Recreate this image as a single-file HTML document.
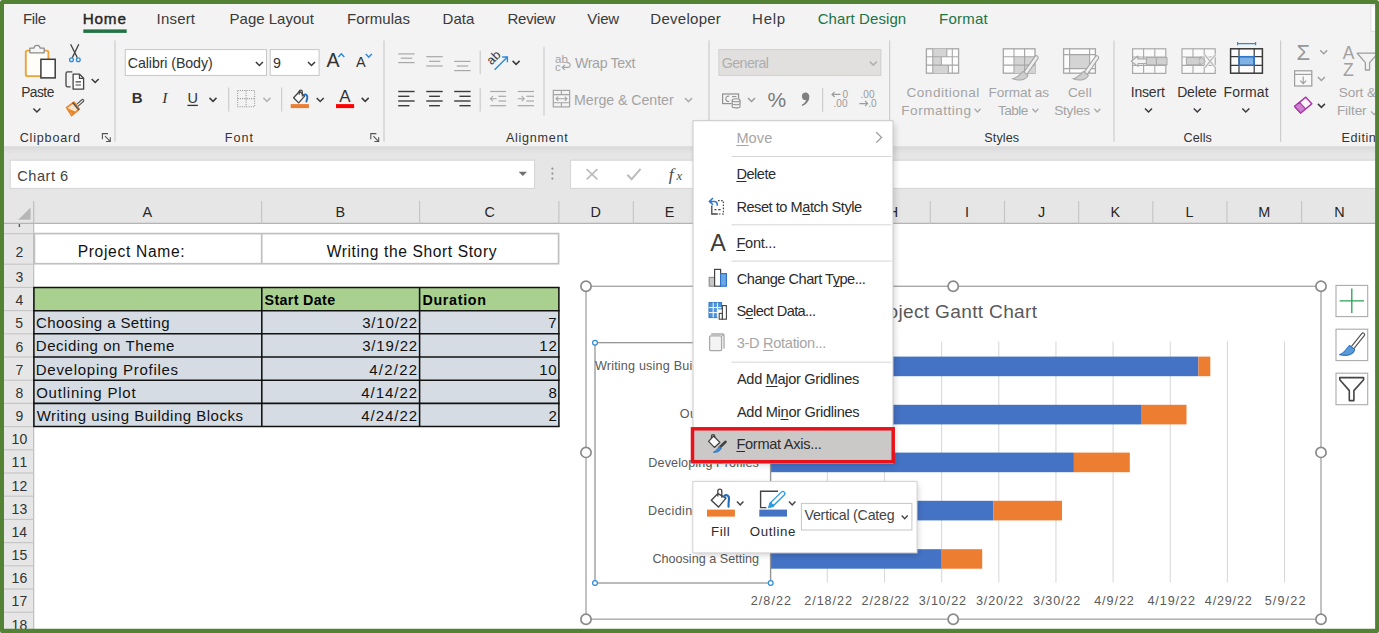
<!DOCTYPE html>
<html lang="en"><head><meta charset="utf-8"><title>Excel Gantt Chart - Format Axis</title>
<style>
html,body{margin:0;padding:0;background:#fff;}
#app{position:relative;width:1379px;height:633px;overflow:hidden;background:#fff;font-family:"Liberation Sans", sans-serif;}
#app svg{position:absolute;left:0;top:0;}
.t{position:absolute;white-space:pre;line-height:1;margin:0;padding:0;}
.c{position:absolute;overflow:hidden;}
u{text-decoration:underline;text-decoration-thickness:1px;text-underline-offset:2px;}
</style></head><body>
<div id="app">
<svg width="1379" height="633" viewBox="0 0 1379 633"><defs><linearGradient id="rsh" x1="0" y1="0" x2="0" y2="1"><stop offset="0" stop-color="#d9d9d9"/><stop offset="1" stop-color="#e6e6e6"/></linearGradient><filter id="ms" x="-10%" y="-10%" width="125%" height="125%"><feGaussianBlur stdDeviation="3"/></filter></defs>
<rect x="0.00" y="0.00" width="1379.00" height="147.00" fill="#f3f3f3" />
<rect x="0.00" y="146.40" width="1379.00" height="78.60" fill="#e6e6e6" />
<rect x="0.00" y="146.40" width="1379.00" height="7.60" fill="url(#rsh)" />
<rect x="1370.80" y="5.20" width="6.20" height="26.10" fill="#fdfdfd" stroke="#e2dfe2" stroke-width="1" />
<rect x="83.30" y="29.40" width="43.40" height="3.50" fill="#217346" />
<line x1="115.00" y1="40.50" x2="115.00" y2="141.80" stroke="#c9c9c9" stroke-width="1.1" />
<line x1="384.00" y1="40.50" x2="384.00" y2="141.80" stroke="#c9c9c9" stroke-width="1.1" />
<line x1="709.00" y1="40.50" x2="709.00" y2="141.80" stroke="#c9c9c9" stroke-width="1.1" />
<line x1="889.70" y1="40.50" x2="889.70" y2="141.80" stroke="#c9c9c9" stroke-width="1.1" />
<line x1="1114.00" y1="40.50" x2="1114.00" y2="141.80" stroke="#c9c9c9" stroke-width="1.1" />
<line x1="1280.60" y1="40.50" x2="1280.60" y2="141.80" stroke="#c9c9c9" stroke-width="1.1" />
<rect x="25.80" y="50.60" width="22.60" height="25.50" fill="#fffdf8" stroke="#e9a43a" stroke-width="1.9" rx="1.6" />
<path d="M29.9 52.8 V48.2 H33.9 A3.2 3.4 0 0 1 40.2 48.2 H44.2 V52.8 Z" fill="#f6f6f6" stroke="#8c8c8c" stroke-width="1.3" stroke-linejoin="round"/>
<rect x="40.90" y="59.30" width="14.30" height="18.60" fill="#ffffff" stroke="#3b3b3b" stroke-width="1.5" />
<path d="M33.40 108.55 L36.90 112.05 L40.40 108.55" fill="none" stroke="#3a3a3a" stroke-width="1.5" stroke-linejoin="miter"/>
<path d="M70.6 44.3 L77.3 57.6 M78.8 44.3 L72.3 57.6" fill="none" stroke="#444" stroke-width="1.3" />
<circle cx="71.50" cy="59.70" r="1.9" fill="none" stroke="#2e8ad8" stroke-width="1.3"/>
<circle cx="78.30" cy="59.70" r="1.9" fill="none" stroke="#2e8ad8" stroke-width="1.3"/>
<path d="M72.3 71.9 H67.6 A1.6 1.6 0 0 0 66 73.5 V85.2 A1.6 1.6 0 0 0 67.6 86.8 H70.6" fill="none" stroke="#444" stroke-width="1.3" />
<path d="M73.1 74.2 H79.6 L83.6 78.2 V89.2 H73.1 Z" fill="#fbfbfb" stroke="#444" stroke-width="1.3" stroke-linejoin="round"/>
<path d="M79.4 74.4 V78.4 H83.4 M75.6 81.9 H81 M75.6 85 H81" fill="none" stroke="#444" stroke-width="1.1" />
<path d="M91.70 78.95 L95.20 82.45 L98.70 78.95" fill="none" stroke="#3a3a3a" stroke-width="1.5" stroke-linejoin="miter"/>
<path d="M76.2 106.2 L82.6 100.6" fill="none" stroke="#555" stroke-width="3.4" stroke-linecap="round"/>
<path d="M76.2 106.2 L82.6 100.6" fill="none" stroke="#f3f3f3" stroke-width="1.2" stroke-linecap="round"/>
<path d="M66.6 107.6 L73.9 102.1 L79.3 109.2 L71.6 115.6 Z" fill="#fbe3c8" stroke="#e8852a" stroke-width="1.7" stroke-linejoin="round"/>
<path d="M67.5 108.2 L72.2 114.6 L75.6 111.8 Z" fill="#e8852a" />
<path d="M72.6 102.6 L78.9 110" fill="none" stroke="#555" stroke-width="1.6" />
<path d="M102.4 139.2 V133.6 H108.0" fill="none" stroke="#555" stroke-width="1.1" />
<path d="M105.0 136.2 L110.1 141.3 M110.3 137.2 V141.5 H106.0" fill="none" stroke="#555" stroke-width="1.1" />
<rect x="125.30" y="49.60" width="141.20" height="25.80" fill="#fff" stroke="#c6c6c6" stroke-width="1" />
<rect x="270.20" y="49.60" width="48.90" height="25.80" fill="#fff" stroke="#c6c6c6" stroke-width="1" />
<path d="M255.90 62.05 L259.40 65.55 L262.90 62.05" fill="none" stroke="#3a3a3a" stroke-width="1.5" stroke-linejoin="miter"/>
<path d="M308.00 62.05 L311.50 65.55 L315.00 62.05" fill="none" stroke="#3a3a3a" stroke-width="1.5" stroke-linejoin="miter"/>
<path d="M338.30 57.00 L341.30 53.80 L344.30 57.00" fill="none" stroke="#2e8ad8" stroke-width="1.5" stroke-linejoin="miter"/>
<path d="M365.80 54.00 L368.80 57.20 L371.80 54.00" fill="none" stroke="#2e8ad8" stroke-width="1.5" stroke-linejoin="miter"/>
<line x1="187.40" y1="105.40" x2="197.90" y2="105.40" stroke="#333" stroke-width="1.3" />
<path d="M209.50 97.85 L213.00 101.35 L216.50 97.85" fill="none" stroke="#3a3a3a" stroke-width="1.5" stroke-linejoin="miter"/>
<line x1="228.70" y1="87.40" x2="228.70" y2="111.50" stroke="#c9c9c9" stroke-width="1.1" />
<rect x="237.60" y="90.50" width="17.00" height="16.30" fill="none" stroke="#9c9c9c" stroke-width="1.1" stroke-dasharray="1.1 1.15"/>
<path d="M246.1 90.5 V106.8 M237.6 98.6 H254.6" fill="none" stroke="#9c9c9c" stroke-width="1.1" stroke-dasharray="1.1 1.15"/>
<path d="M263.40 97.85 L266.90 101.35 L270.40 97.85" fill="none" stroke="#b5b5b5" stroke-width="1.5" stroke-linejoin="miter"/>
<line x1="281.70" y1="87.40" x2="281.70" y2="111.50" stroke="#c9c9c9" stroke-width="1.1" />
<path d="M293.6 97.7 L299.6 91.2 L304.6 96.1 L298.7 102.9 Z" fill="#fafafa" stroke="#444" stroke-width="1.3" stroke-linejoin="round"/>
<path d="M299.2 94.8 V91.6 A1.55 1.55 0 0 1 302.3 91.6 V96.4" fill="none" stroke="#444" stroke-width="1.2" />
<path d="M303.8 95.2 C305.8 93.4 307.8 95.4 307.3 98 C307 99.6 306.6 100.6 306.4 101.6" fill="none" stroke="#1f6fb8" stroke-width="1.9" stroke-linecap="round"/>
<rect x="290.70" y="104.10" width="18.20" height="4.00" fill="#ed7d31" />
<path d="M316.70 97.95 L320.20 101.45 L323.70 97.95" fill="none" stroke="#3a3a3a" stroke-width="1.5" stroke-linejoin="miter"/>
<rect x="336.00" y="104.10" width="18.10" height="4.00" fill="#ff0000" />
<path d="M361.70 97.85 L365.20 101.35 L368.70 97.85" fill="none" stroke="#3a3a3a" stroke-width="1.5" stroke-linejoin="miter"/>
<path d="M370.8 139.2 V133.6 H376.4" fill="none" stroke="#555" stroke-width="1.1" />
<path d="M373.4 136.2 L378.5 141.3 M378.7 137.2 V141.5 H374.4" fill="none" stroke="#555" stroke-width="1.1" />
<line x1="398.20" y1="53.90" x2="414.60" y2="53.90" stroke="#a8a8a8" stroke-width="1.2" />
<line x1="400.80" y1="58.20" x2="412.20" y2="58.20" stroke="#a8a8a8" stroke-width="1.2" />
<line x1="398.20" y1="62.60" x2="414.60" y2="62.60" stroke="#a8a8a8" stroke-width="1.2" />
<line x1="426.30" y1="56.70" x2="442.70" y2="56.70" stroke="#a8a8a8" stroke-width="1.2" />
<line x1="428.90" y1="61.30" x2="440.30" y2="61.30" stroke="#a8a8a8" stroke-width="1.2" />
<line x1="426.30" y1="66.00" x2="442.70" y2="66.00" stroke="#a8a8a8" stroke-width="1.2" />
<line x1="454.20" y1="61.40" x2="470.60" y2="61.40" stroke="#a8a8a8" stroke-width="1.2" />
<line x1="456.80" y1="66.00" x2="468.20" y2="66.00" stroke="#a8a8a8" stroke-width="1.2" />
<line x1="454.20" y1="70.60" x2="470.60" y2="70.60" stroke="#a8a8a8" stroke-width="1.2" />
<line x1="480.20" y1="50.40" x2="480.20" y2="74.30" stroke="#c9c9c9" stroke-width="1.1" />
<text x="0.00" y="0.00" font-family="Liberation Sans, sans-serif" font-size="12.5" fill="#3a3a3a" transform="translate(491.6 65.4) rotate(-45)">ab</text>
<path d="M494.6 69.8 L507.2 57.2 M502.2 57 H507.4 V62.2" fill="none" stroke="#2e8ad8" stroke-width="1.4" />
<path d="M512.60 60.85 L516.10 64.35 L519.60 60.85" fill="none" stroke="#3a3a3a" stroke-width="1.5" stroke-linejoin="miter"/>
<line x1="544.00" y1="47.00" x2="544.00" y2="115.40" stroke="#c9c9c9" stroke-width="1.1" />
<text x="555.00" y="62.60" font-family="Liberation Sans, sans-serif" font-size="11.5" fill="#a3a3a3" >ab</text>
<text x="555.00" y="70.80" font-family="Liberation Sans, sans-serif" font-size="11.5" fill="#a3a3a3" >c</text>
<path d="M562.4 67.4 H567.8 A2.4 2.4 0 0 0 567.8 62.6 H566.6 M564.8 65 L562.2 67.4 L564.8 69.8" fill="none" stroke="#a3a3a3" stroke-width="1.1" />
<line x1="398.20" y1="91.50" x2="414.60" y2="91.50" stroke="#3c3c3c" stroke-width="1.4" />
<line x1="398.20" y1="96.30" x2="409.40" y2="96.30" stroke="#3c3c3c" stroke-width="1.4" />
<line x1="398.20" y1="101.00" x2="414.60" y2="101.00" stroke="#3c3c3c" stroke-width="1.4" />
<line x1="398.20" y1="105.70" x2="409.40" y2="105.70" stroke="#3c3c3c" stroke-width="1.4" />
<line x1="426.30" y1="91.50" x2="442.70" y2="91.50" stroke="#3c3c3c" stroke-width="1.4" />
<line x1="429.10" y1="96.30" x2="439.90" y2="96.30" stroke="#3c3c3c" stroke-width="1.4" />
<line x1="426.30" y1="101.00" x2="442.70" y2="101.00" stroke="#3c3c3c" stroke-width="1.4" />
<line x1="429.10" y1="105.70" x2="439.90" y2="105.70" stroke="#3c3c3c" stroke-width="1.4" />
<line x1="454.20" y1="91.50" x2="470.60" y2="91.50" stroke="#3c3c3c" stroke-width="1.4" />
<line x1="459.40" y1="96.30" x2="470.60" y2="96.30" stroke="#3c3c3c" stroke-width="1.4" />
<line x1="454.20" y1="101.00" x2="470.60" y2="101.00" stroke="#3c3c3c" stroke-width="1.4" />
<line x1="459.40" y1="105.70" x2="470.60" y2="105.70" stroke="#3c3c3c" stroke-width="1.4" />
<line x1="480.20" y1="88.30" x2="480.20" y2="111.50" stroke="#c9c9c9" stroke-width="1.1" />
<line x1="490.10" y1="91.50" x2="506.10" y2="91.50" stroke="#a8a8a8" stroke-width="1.2" />
<line x1="498.50" y1="96.30" x2="506.10" y2="96.30" stroke="#a8a8a8" stroke-width="1.2" />
<line x1="498.50" y1="101.00" x2="506.10" y2="101.00" stroke="#a8a8a8" stroke-width="1.2" />
<line x1="490.10" y1="105.70" x2="506.10" y2="105.70" stroke="#a8a8a8" stroke-width="1.2" />
<path d="M496.70000000000005 98.7 H490.5 M492.90000000000003 96.2 L490.40000000000003 98.7 L492.90000000000003 101.2" fill="none" stroke="#a8a8a8" stroke-width="1.1" />
<line x1="517.70" y1="91.50" x2="534.00" y2="91.50" stroke="#a8a8a8" stroke-width="1.2" />
<line x1="526.40" y1="96.30" x2="534.00" y2="96.30" stroke="#a8a8a8" stroke-width="1.2" />
<line x1="526.40" y1="101.00" x2="534.00" y2="101.00" stroke="#a8a8a8" stroke-width="1.2" />
<line x1="517.70" y1="105.70" x2="534.00" y2="105.70" stroke="#a8a8a8" stroke-width="1.2" />
<path d="M517.7 98.7 H524.1 M521.7 96.2 L524.2 98.7 L521.7 101.2" fill="none" stroke="#a8a8a8" stroke-width="1.1" />
<rect x="553.30" y="90.40" width="16.30" height="16.50" fill="none" stroke="#a3a3a3" stroke-width="1.2" />
<path d="M553.3 94.6 H569.6 M553.3 102.8 H569.6 M561.4 90.4 V94.6 M561.4 102.8 V106.9" fill="none" stroke="#a3a3a3" stroke-width="1.1" />
<path d="M556 98.7 H567 M558.2 96.6 L556 98.7 L558.2 100.8 M564.8 96.6 L567 98.7 L564.8 100.8" fill="none" stroke="#a3a3a3" stroke-width="1.1" />
<path d="M685.00 98.15 L688.50 101.65 L692.00 98.15" fill="none" stroke="#b0b0b0" stroke-width="1.5" stroke-linejoin="miter"/>
<rect x="718.90" y="49.60" width="162.00" height="25.80" fill="#e1e0df" stroke="#cfcfcf" stroke-width="1" />
<path d="M869.80 61.65 L873.30 65.15 L876.80 61.65" fill="none" stroke="#b0b0b0" stroke-width="1.5" stroke-linejoin="miter"/>
<rect x="722.60" y="94.00" width="16.00" height="9.60" fill="none" stroke="#8f8f8f" stroke-width="1.2" />
<path d="M729.2 96.2 A2.7 2.7 0 1 0 729.2 101.4" fill="none" stroke="#8f8f8f" stroke-width="1.1" />
<path d="M732 96.6 H736.4" fill="none" stroke="#8f8f8f" stroke-width="1.0" />
<rect x="731.40" y="98.60" width="9.40" height="9.60" fill="#f3f3f3" />
<path d="M732.2 100.2 V106.4 A3.9 1.5 0 0 0 740 106.4 V100.2" fill="#f3f3f3" stroke="#8f8f8f" stroke-width="1.1" />
<ellipse cx="736.1" cy="100.2" rx="3.9" ry="1.5" fill="#f3f3f3" stroke="#8f8f8f" stroke-width="1.1"/>
<path d="M732.2 103.3 A3.9 1.5 0 0 0 740 103.3" fill="none" stroke="#8f8f8f" stroke-width="1.0" />
<path d="M748.00 97.95 L751.50 101.45 L755.00 97.95" fill="none" stroke="#9a9a9a" stroke-width="1.5" stroke-linejoin="miter"/>
<path d="M805.3 92.6 A3.7 3.7 0 0 1 809.3 96.6 C809.5 101 806.4 104.6 802.3 106 L801.7 104.7 C804.4 103.4 805.8 101.7 806 100 A3.7 3.7 0 0 1 805.3 92.6 Z" fill="#7f7f7f" />
<line x1="822.60" y1="87.90" x2="822.60" y2="111.80" stroke="#c9c9c9" stroke-width="1.1" />
<path d="M840.4 94.4 H832 M834.6 91.8 L832 94.4 L834.6 97" fill="none" stroke="#9a9a9a" stroke-width="1.1" />
<text x="842.60" y="98.20" font-family="Liberation Sans, sans-serif" font-size="10" fill="#9a9a9a" >0</text>
<text x="833.60" y="107.40" font-family="Liberation Sans, sans-serif" font-size="10" fill="#9a9a9a" >.00</text>
<text x="860.60" y="98.20" font-family="Liberation Sans, sans-serif" font-size="10" fill="#9a9a9a" >.00</text>
<path d="M859.4 103.6 H867.6 M865 101 L867.6 103.6 L865 106.2" fill="none" stroke="#9a9a9a" stroke-width="1.1" />
<text x="868.20" y="107.40" font-family="Liberation Sans, sans-serif" font-size="10" fill="#9a9a9a" >.0</text>
<rect x="926.40" y="48.80" width="32.20" height="24.40" fill="#fcfcfc" stroke="#a6a6a6" stroke-width="1.3" />
<rect x="932.80" y="48.80" width="14.00" height="8.00" fill="#d4d4d4" />
<rect x="932.80" y="56.80" width="8.50" height="8.30" fill="#d4d4d4" />
<rect x="932.80" y="65.10" width="15.60" height="8.10" fill="#d4d4d4" />
<path d="M932.8 48.8 V73.2 M952.3 48.8 V73.2 M926.4 56.8 H958.6 M926.4 65.1 H958.6 M946.8 48.8 V56.8 M941.3 56.8 V65.1 M948.4 65.1 V73.2" fill="none" stroke="#a6a6a6" stroke-width="1.1" />
<path d="M974.60 108.80 L977.60 112.00 L980.60 108.80" fill="none" stroke="#a8a8a8" stroke-width="1.3" stroke-linejoin="miter"/>
<rect x="1003.30" y="48.80" width="31.70" height="24.40" fill="#fcfcfc" stroke="#a6a6a6" stroke-width="1.3" />
<rect x="1014.00" y="56.80" width="10.60" height="8.30" fill="#d4d4d4" />
<rect x="1024.60" y="56.80" width="10.40" height="16.40" fill="#d4d4d4" />
<rect x="1014.00" y="65.10" width="10.60" height="8.10" fill="#d4d4d4" />
<path d="M1014 48.8 V73.2 M1024.6 48.8 V73.2 M1003.3 56.8 H1035 M1003.3 65.1 H1035" fill="none" stroke="#a6a6a6" stroke-width="1.1" />
<path d="M1036.4 57.6 L1025.4 73.2" fill="none" stroke="#a6a6a6" stroke-width="4.8" stroke-linecap="round"/>
<path d="M1036.4 57.6 L1025.4 73.2" fill="none" stroke="#f1f1f1" stroke-width="2.5" stroke-linecap="round"/>
<path d="M1023.0000000000001 71.4 L1028.0 75.2 C1026.4 80.0 1019.4000000000001 81.2 1012.8000000000001 78.8 C1017.4000000000001 77.8 1019.8000000000001 75.0 1023.0000000000001 71.4 Z" fill="#cfcfcf" stroke="#a6a6a6" stroke-width="1.1" />
<path d="M1032.40 108.80 L1035.40 112.00 L1038.40 108.80" fill="none" stroke="#a8a8a8" stroke-width="1.3" stroke-linejoin="miter"/>
<rect x="1063.60" y="48.80" width="31.80" height="24.40" fill="#fcfcfc" stroke="#a6a6a6" stroke-width="1.3" />
<rect x="1069.60" y="54.60" width="20.00" height="14.00" fill="#d4d4d4" />
<path d="M1069.6 48.8 V73.2 M1089.6 48.8 V73.2 M1063.6 54.6 H1095.4 M1063.6 68.6 H1095.4" fill="none" stroke="#a6a6a6" stroke-width="1.1" />
<path d="M1096.8 57.6 L1085.8 73.2" fill="none" stroke="#a6a6a6" stroke-width="4.8" stroke-linecap="round"/>
<path d="M1096.8 57.6 L1085.8 73.2" fill="none" stroke="#f1f1f1" stroke-width="2.5" stroke-linecap="round"/>
<path d="M1083.3999999999999 71.4 L1088.3999999999999 75.2 C1086.8 80.0 1079.8 81.2 1073.2 78.8 C1077.8 77.8 1080.2 75.0 1083.3999999999999 71.4 Z" fill="#cfcfcf" stroke="#a6a6a6" stroke-width="1.1" />
<path d="M1094.30 108.80 L1097.30 112.00 L1100.30 108.80" fill="none" stroke="#a8a8a8" stroke-width="1.3" stroke-linejoin="miter"/>
<rect x="1132.60" y="48.80" width="33.20" height="24.60" fill="#fafafa" stroke="#a9a9a9" stroke-width="1.2" />
<path d="M1143.6 48.8 V73.4 M1154.8 48.8 V73.4 M1132.6 57.0 H1165.8 M1132.6 65.4 H1165.8" fill="none" stroke="#a9a9a9" stroke-width="1.1" />
<rect x="1146.40" y="57.60" width="20.60" height="7.20" fill="#d0d0d0" stroke="#a9a9a9" stroke-width="1.0" />
<line x1="1156.40" y1="57.60" x2="1156.40" y2="64.80" stroke="#a9a9a9" stroke-width="1.0" />
<path d="M1146.4 58.9 H1138 V56 L1131.2 61.2 L1138 66.4 V63.5 H1146.4 Z" fill="#f3f3f3" stroke="#a9a9a9" stroke-width="1.1" stroke-linejoin="round"/>
<path d="M1145.00 108.45 L1148.50 111.95 L1152.00 108.45" fill="none" stroke="#3a3a3a" stroke-width="1.5" stroke-linejoin="miter"/>
<rect x="1182.00" y="48.80" width="33.20" height="24.60" fill="#fafafa" stroke="#a9a9a9" stroke-width="1.2" />
<path d="M1193 48.8 V73.4 M1204.2 48.8 V73.4 M1182 57.0 H1215.2 M1182 65.4 H1215.2" fill="none" stroke="#a9a9a9" stroke-width="1.1" />
<rect x="1186.40" y="57.60" width="13.00" height="7.20" fill="#d0d0d0" stroke="#a9a9a9" stroke-width="1.0" />
<path d="M1199.4 58.9 H1200.4 V56.6 L1205.6 61.2 L1200.4 65.8 V63.5 H1199.4" fill="#d0d0d0" stroke="#a9a9a9" stroke-width="1.0" />
<path d="M1204.6 54.6 L1215.6 67.8 M1215.6 54.6 L1204.6 67.8" fill="none" stroke="#f3f3f3" stroke-width="3.2" />
<path d="M1204.6 54.6 L1215.6 67.8 M1215.6 54.6 L1204.6 67.8" fill="none" stroke="#b8b8b8" stroke-width="1.3" />
<path d="M1193.80 108.45 L1197.30 111.95 L1200.80 108.45" fill="none" stroke="#3a3a3a" stroke-width="1.5" stroke-linejoin="miter"/>
<rect x="1230.60" y="48.80" width="31.80" height="24.40" fill="#fdfdfd" stroke="#3a3a3a" stroke-width="1.5" />
<rect x="1239.00" y="56.60" width="15.20" height="8.80" fill="#7fb2e5" />
<path d="M1239 48.8 V73.2 M1254.2 48.8 V73.2 M1230.6 56.6 H1262.4 M1230.6 65.4 H1262.4" fill="none" stroke="#3a3a3a" stroke-width="1.2" />
<rect x="1239.00" y="56.60" width="15.20" height="8.80" fill="none" stroke="#2e75c8" stroke-width="1.3" />
<path d="M1237.6 43.6 H1255.6 M1237.6 41.9 V45.3 M1255.6 41.9 V45.3" fill="none" stroke="#2e8ad8" stroke-width="1.2" />
<path d="M1242.30 108.45 L1245.80 111.95 L1249.30 108.45" fill="none" stroke="#3a3a3a" stroke-width="1.5" stroke-linejoin="miter"/>
<path d="M1320.20 50.25 L1323.70 53.75 L1327.20 50.25" fill="none" stroke="#a0a0a0" stroke-width="1.5" stroke-linejoin="miter"/>
<rect x="1294.60" y="70.80" width="17.20" height="15.20" fill="#f8f8f8" stroke="#9c9c9c" stroke-width="1.2" />
<line x1="1294.60" y1="74.40" x2="1311.80" y2="74.40" stroke="#9c9c9c" stroke-width="1.1" />
<path d="M1303.2 76.6 V83.4 M1300.2 80.6 L1303.2 83.6 L1306.2 80.6" fill="none" stroke="#9c9c9c" stroke-width="1.1" />
<path d="M1317.90 77.05 L1321.40 80.55 L1324.90 77.05" fill="none" stroke="#a0a0a0" stroke-width="1.5" stroke-linejoin="miter"/>
<path d="M1294.6 106.4 L1305.8 97.2 L1311.8 103.8 L1300.6 113 Z" fill="#fdf8fd" stroke="#a83aa8" stroke-width="1.5" stroke-linejoin="round"/>
<path d="M1294.6 106.4 L1299.6 102.3 L1305.6 108.9 L1300.6 113 Z" fill="#cf7fcf" stroke="#a83aa8" stroke-width="1.2" stroke-linejoin="round"/>
<path d="M1317.90 103.85 L1321.40 107.35 L1324.90 103.85" fill="none" stroke="#3a3a3a" stroke-width="1.5" stroke-linejoin="miter"/>
<path d="M1357.2 53.2 H1378 L1369.6 62.6 V70 H1365.4 V62.6 Z" fill="#f3f3f3" stroke="#a0a0a0" stroke-width="1.3" stroke-linejoin="round"/>
<path d="M1371.00 111.40 L1374.00 114.60 L1377.00 111.40" fill="none" stroke="#a8a8a8" stroke-width="1.3" stroke-linejoin="miter"/>
<rect x="10.20" y="160.20" width="524.40" height="28.20" fill="#fff" stroke="#d4d4d4" stroke-width="1" />
<rect x="570.60" y="160.20" width="811.40" height="28.20" fill="#fff" stroke="#d4d4d4" stroke-width="1" />
<path d="M518.6 171.8 H527 L522.8 176 Z" fill="#707070" />
<circle cx="552.40" cy="168.60" r="1.1" fill="#929292"/>
<circle cx="552.40" cy="173.60" r="1.1" fill="#929292"/>
<circle cx="552.40" cy="178.60" r="1.1" fill="#929292"/>
<path d="M586.6 169.2 L597.4 179.4 M597.4 169.2 L586.6 179.4" fill="none" stroke="#bdbdbd" stroke-width="1.8" />
<path d="M627.4 174.8 L631.6 179.2 L640.6 168.8" fill="none" stroke="#bdbdbd" stroke-width="2.0" />
<rect x="0.00" y="223.40" width="1379.00" height="409.60" fill="#fff" />
<rect x="0.00" y="189.00" width="1379.00" height="34.40" fill="#e6e6e6" />
<rect x="0.00" y="223.40" width="33.70" height="409.60" fill="#e6e6e6" />
<line x1="0.00" y1="223.40" x2="1379.00" y2="223.40" stroke="#b4b4b4" stroke-width="1.2" />
<line x1="33.70" y1="201.00" x2="33.70" y2="633.00" stroke="#b9b9b9" stroke-width="1.1" />
<line x1="261.60" y1="201.00" x2="261.60" y2="223.40" stroke="#c4c4c4" stroke-width="1.1" />
<line x1="419.60" y1="201.00" x2="419.60" y2="223.40" stroke="#c4c4c4" stroke-width="1.1" />
<line x1="558.90" y1="201.00" x2="558.90" y2="223.40" stroke="#c4c4c4" stroke-width="1.1" />
<line x1="633.30" y1="201.00" x2="633.30" y2="223.40" stroke="#c4c4c4" stroke-width="1.1" />
<line x1="707.50" y1="201.00" x2="707.50" y2="223.40" stroke="#c4c4c4" stroke-width="1.1" />
<line x1="781.70" y1="201.00" x2="781.70" y2="223.40" stroke="#c4c4c4" stroke-width="1.1" />
<line x1="856.00" y1="201.00" x2="856.00" y2="223.40" stroke="#c4c4c4" stroke-width="1.1" />
<line x1="930.30" y1="201.00" x2="930.30" y2="223.40" stroke="#c4c4c4" stroke-width="1.1" />
<line x1="1004.50" y1="201.00" x2="1004.50" y2="223.40" stroke="#c4c4c4" stroke-width="1.1" />
<line x1="1078.70" y1="201.00" x2="1078.70" y2="223.40" stroke="#c4c4c4" stroke-width="1.1" />
<line x1="1152.80" y1="201.00" x2="1152.80" y2="223.40" stroke="#c4c4c4" stroke-width="1.1" />
<line x1="1227.00" y1="201.00" x2="1227.00" y2="223.40" stroke="#c4c4c4" stroke-width="1.1" />
<line x1="1301.60" y1="201.00" x2="1301.60" y2="223.40" stroke="#c4c4c4" stroke-width="1.1" />
<line x1="4.00" y1="233.70" x2="33.70" y2="233.70" stroke="#c4c4c4" stroke-width="1.1" />
<line x1="4.00" y1="264.20" x2="33.70" y2="264.20" stroke="#c4c4c4" stroke-width="1.1" />
<line x1="4.00" y1="287.40" x2="33.70" y2="287.40" stroke="#c4c4c4" stroke-width="1.1" />
<line x1="4.00" y1="310.60" x2="33.70" y2="310.60" stroke="#c4c4c4" stroke-width="1.1" />
<line x1="4.00" y1="333.80" x2="33.70" y2="333.80" stroke="#c4c4c4" stroke-width="1.1" />
<line x1="4.00" y1="357.00" x2="33.70" y2="357.00" stroke="#c4c4c4" stroke-width="1.1" />
<line x1="4.00" y1="380.20" x2="33.70" y2="380.20" stroke="#c4c4c4" stroke-width="1.1" />
<line x1="4.00" y1="403.40" x2="33.70" y2="403.40" stroke="#c4c4c4" stroke-width="1.1" />
<line x1="4.00" y1="426.60" x2="33.70" y2="426.60" stroke="#c4c4c4" stroke-width="1.1" />
<line x1="4.00" y1="449.80" x2="33.70" y2="449.80" stroke="#c4c4c4" stroke-width="1.1" />
<line x1="4.00" y1="473.00" x2="33.70" y2="473.00" stroke="#c4c4c4" stroke-width="1.1" />
<line x1="4.00" y1="496.20" x2="33.70" y2="496.20" stroke="#c4c4c4" stroke-width="1.1" />
<line x1="4.00" y1="519.40" x2="33.70" y2="519.40" stroke="#c4c4c4" stroke-width="1.1" />
<line x1="4.00" y1="542.60" x2="33.70" y2="542.60" stroke="#c4c4c4" stroke-width="1.1" />
<line x1="4.00" y1="565.80" x2="33.70" y2="565.80" stroke="#c4c4c4" stroke-width="1.1" />
<line x1="4.00" y1="589.00" x2="33.70" y2="589.00" stroke="#c4c4c4" stroke-width="1.1" />
<line x1="4.00" y1="612.20" x2="33.70" y2="612.20" stroke="#c4c4c4" stroke-width="1.1" />
<line x1="4.00" y1="635.40" x2="33.70" y2="635.40" stroke="#c4c4c4" stroke-width="1.1" />
<path d="M30.6 207.4 V219.8 H18.2 Z" fill="#b7b7b7" />
<line x1="19.40" y1="224.00" x2="19.40" y2="227.00" stroke="#555" stroke-width="1.4" />
<rect x="34.40" y="233.60" width="524.20" height="30.10" fill="#fff" stroke="#c0c0c0" stroke-width="1.7" />
<line x1="261.70" y1="233.60" x2="261.70" y2="263.70" stroke="#c0c0c0" stroke-width="1.7" />
<rect x="33.90" y="287.50" width="525.00" height="23.20" fill="#a9d08e" />
<rect x="33.90" y="310.70" width="525.00" height="115.80" fill="#d6dce4" />
<line x1="33.20" y1="287.50" x2="559.60" y2="287.50" stroke="#111" stroke-width="1.55" />
<line x1="33.20" y1="310.67" x2="559.60" y2="310.67" stroke="#111" stroke-width="1.55" />
<line x1="33.20" y1="333.84" x2="559.60" y2="333.84" stroke="#111" stroke-width="1.55" />
<line x1="33.20" y1="357.01" x2="559.60" y2="357.01" stroke="#111" stroke-width="1.55" />
<line x1="33.20" y1="380.18" x2="559.60" y2="380.18" stroke="#111" stroke-width="1.55" />
<line x1="33.20" y1="403.35" x2="559.60" y2="403.35" stroke="#111" stroke-width="1.55" />
<line x1="33.20" y1="426.52" x2="559.60" y2="426.52" stroke="#111" stroke-width="1.55" />
<line x1="33.90" y1="287.50" x2="33.90" y2="426.50" stroke="#111" stroke-width="1.55" />
<line x1="261.80" y1="287.50" x2="261.80" y2="426.50" stroke="#111" stroke-width="1.55" />
<line x1="419.60" y1="287.50" x2="419.60" y2="426.50" stroke="#111" stroke-width="1.55" />
<line x1="558.90" y1="287.50" x2="558.90" y2="426.50" stroke="#111" stroke-width="1.55" />
<rect x="586.00" y="286.30" width="735.00" height="332.90" fill="#fff" stroke="#a9a9a9" stroke-width="1.4" />
<line x1="770.20" y1="341.40" x2="770.20" y2="582.60" stroke="#d9d9d9" stroke-width="1.1" />
<line x1="827.35" y1="341.40" x2="827.35" y2="582.60" stroke="#d9d9d9" stroke-width="1.1" />
<line x1="884.50" y1="341.40" x2="884.50" y2="582.60" stroke="#d9d9d9" stroke-width="1.1" />
<line x1="941.65" y1="341.40" x2="941.65" y2="582.60" stroke="#d9d9d9" stroke-width="1.1" />
<line x1="998.80" y1="341.40" x2="998.80" y2="582.60" stroke="#d9d9d9" stroke-width="1.1" />
<line x1="1055.95" y1="341.40" x2="1055.95" y2="582.60" stroke="#d9d9d9" stroke-width="1.1" />
<line x1="1113.10" y1="341.40" x2="1113.10" y2="582.60" stroke="#d9d9d9" stroke-width="1.1" />
<line x1="1170.25" y1="341.40" x2="1170.25" y2="582.60" stroke="#d9d9d9" stroke-width="1.1" />
<line x1="1227.40" y1="341.40" x2="1227.40" y2="582.60" stroke="#d9d9d9" stroke-width="1.1" />
<line x1="1284.55" y1="341.40" x2="1284.55" y2="582.60" stroke="#d9d9d9" stroke-width="1.1" />
<rect x="770.70" y="356.60" width="427.70" height="19.60" fill="#4472c4" />
<rect x="1198.40" y="356.60" width="11.90" height="19.60" fill="#ed7d31" />
<rect x="770.70" y="404.80" width="371.00" height="19.60" fill="#4472c4" />
<rect x="1141.70" y="404.80" width="44.80" height="19.60" fill="#ed7d31" />
<rect x="770.70" y="452.60" width="303.20" height="19.60" fill="#4472c4" />
<rect x="1073.90" y="452.60" width="55.90" height="19.60" fill="#ed7d31" />
<rect x="770.70" y="500.80" width="222.70" height="19.60" fill="#4472c4" />
<rect x="993.40" y="500.80" width="68.60" height="19.60" fill="#ed7d31" />
<rect x="770.70" y="549.20" width="170.90" height="19.50" fill="#4472c4" />
<rect x="941.60" y="549.20" width="40.60" height="19.50" fill="#ed7d31" />
<rect x="595.00" y="342.70" width="175.70" height="240.30" fill="none" stroke="#8e8e8e" stroke-width="1.2" />
<circle cx="595.00" cy="342.70" r="2.4" fill="#fff" stroke="#2e8ad8" stroke-width="1.2"/>
<circle cx="770.70" cy="342.70" r="2.4" fill="#fff" stroke="#2e8ad8" stroke-width="1.2"/>
<circle cx="595.00" cy="583.00" r="2.4" fill="#fff" stroke="#2e8ad8" stroke-width="1.2"/>
<circle cx="770.70" cy="583.00" r="2.4" fill="#fff" stroke="#2e8ad8" stroke-width="1.2"/>
<circle cx="586.00" cy="286.30" r="5.1" fill="#fff" stroke="#8a8a8a" stroke-width="1.7"/>
<circle cx="953.20" cy="286.30" r="5.1" fill="#fff" stroke="#8a8a8a" stroke-width="1.7"/>
<circle cx="1321.00" cy="286.30" r="5.1" fill="#fff" stroke="#8a8a8a" stroke-width="1.7"/>
<circle cx="586.00" cy="452.40" r="5.1" fill="#fff" stroke="#8a8a8a" stroke-width="1.7"/>
<circle cx="1321.00" cy="452.40" r="5.1" fill="#fff" stroke="#8a8a8a" stroke-width="1.7"/>
<circle cx="586.00" cy="619.20" r="5.1" fill="#fff" stroke="#8a8a8a" stroke-width="1.7"/>
<circle cx="953.20" cy="619.20" r="5.1" fill="#fff" stroke="#8a8a8a" stroke-width="1.7"/>
<circle cx="1321.00" cy="619.20" r="5.1" fill="#fff" stroke="#8a8a8a" stroke-width="1.7"/>
<rect x="1336.00" y="285.40" width="31.70" height="31.20" fill="#fff" stroke="#ababab" stroke-width="1.1" />
<rect x="1336.00" y="329.20" width="31.70" height="31.40" fill="#fff" stroke="#ababab" stroke-width="1.1" />
<rect x="1336.00" y="373.20" width="31.70" height="31.50" fill="#fff" stroke="#ababab" stroke-width="1.1" />
<path d="M1351.8 288.6 V313 M1339.6 300.8 H1364" fill="none" stroke="#2ea25a" stroke-width="1.35" />
<path d="M1363 334.6 L1352.8 347.4" fill="none" stroke="#555" stroke-width="4.4" stroke-linecap="round"/>
<path d="M1363 334.6 L1352.8 347.4" fill="none" stroke="#fff" stroke-width="2.0" stroke-linecap="round"/>
<path d="M1349.6 345.4 L1354.6 349.4 C1354 354 1348 356.8 1339.6 354.6 C1344 353.6 1345.6 349.4 1349.6 345.4 Z" fill="#5b9bd5" stroke="#2e75c8" stroke-width="1.1" stroke-linejoin="round"/>
<path d="M1339.8 377.6 H1363.6 V379.8 L1353.9 390.6 V400.6 H1349.3 V390.6 L1339.8 379.8 Z" fill="#fff" stroke="#444" stroke-width="1.6" stroke-linejoin="round"/></svg>
<span class="t" style="left:22.93px;top:11.0px;font-size:15.0px;color:#3a3a3a;letter-spacing:-0.316px;">File</span>
<span class="t" style="left:82.67px;top:11.0px;font-size:15.3px;color:#262626;-webkit-text-stroke:0.4px #262626;letter-spacing:0.823px;">Home</span>
<span class="t" style="left:156.56px;top:11.0px;font-size:15.0px;color:#3a3a3a;letter-spacing:0.196px;">Insert</span>
<span class="t" style="left:229.56px;top:11.0px;font-size:15.0px;color:#3a3a3a;letter-spacing:0.004px;">Page Layout</span>
<span class="t" style="left:347.09px;top:11.0px;font-size:15.0px;color:#3a3a3a;letter-spacing:0.059px;">Formulas</span>
<span class="t" style="left:442.46px;top:11.0px;font-size:15.0px;color:#3a3a3a;letter-spacing:0.095px;">Data</span>
<span class="t" style="left:507.56px;top:11.0px;font-size:15.0px;color:#3a3a3a;letter-spacing:-0.265px;">Review</span>
<span class="t" style="left:587.25px;top:11.0px;font-size:15.0px;color:#3a3a3a;letter-spacing:-0.095px;">View</span>
<span class="t" style="left:650.36px;top:11.0px;font-size:15.0px;color:#3a3a3a;letter-spacing:0.266px;">Developer</span>
<span class="t" style="left:752.09px;top:11.0px;font-size:15.0px;color:#3a3a3a;letter-spacing:0.744px;">Help</span>
<span class="t" style="left:817.68px;top:11.0px;font-size:15.0px;color:#217346;letter-spacing:0.088px;">Chart Design</span>
<span class="t" style="left:939.09px;top:11.0px;font-size:15.0px;color:#217346;letter-spacing:0.227px;">Format</span>
<span class="t" style="left:21.18px;top:86.0px;font-size:13.8px;color:#333333;letter-spacing:-0.531px;">Paste</span>
<span class="t" style="left:19.66px;top:132.0px;font-size:12.6px;color:#333333;letter-spacing:0.805px;">Clipboard</span>
<span class="t" style="left:127.83px;top:56.0px;font-size:14.2px;color:#333333;letter-spacing:-0.086px;">Calibri (Body)</span>
<span class="t" style="left:272.93px;top:56.0px;font-size:14.2px;color:#333333;">9</span>
<span class="t" style="left:326.38px;top:51.0px;font-size:19.5px;color:#333333;">A</span>
<span class="t" style="left:356.10px;top:55.0px;font-size:14.5px;color:#333333;">A</span>
<span class="t" style="left:131.70px;top:90.0px;font-size:15px;color:#333333;font-weight:700;">B</span>
<span class="t" style="left:162.35px;top:90.0px;font-size:15.5px;color:#333333;font-style:italic;font-family:'Liberation Serif', serif;">I</span>
<span class="t" style="left:187.44px;top:91.0px;font-size:14.5px;color:#333333;">U</span>
<span class="t" style="left:339.29px;top:88.0px;font-size:17px;color:#333333;">A</span>
<span class="t" style="left:224.75px;top:132.0px;font-size:12.6px;color:#333333;letter-spacing:0.987px;">Font</span>
<span class="t" style="left:574.91px;top:56.0px;font-size:14.2px;color:#a3a3a3;letter-spacing:-0.338px;">Wrap Text</span>
<span class="t" style="left:574.09px;top:93.0px;font-size:14.2px;color:#a3a3a3;letter-spacing:-0.043px;">Merge &amp; Center</span>
<span class="t" style="left:505.89px;top:132.0px;font-size:12.6px;color:#333333;letter-spacing:0.720px;">Alignment</span>
<span class="t" style="left:721.68px;top:56.0px;font-size:14.2px;color:#adadad;letter-spacing:-0.536px;">General</span>
<span class="t" style="left:767.50px;top:89.0px;font-size:21px;color:#7a7a7a;">%</span>
<span class="t" style="left:906.55px;top:86.0px;font-size:13.6px;color:#a3a3a3;letter-spacing:0.470px;">Conditional</span>
<span class="t" style="left:901.27px;top:104.0px;font-size:13.6px;color:#a3a3a3;letter-spacing:0.532px;">Formatting</span>
<span class="t" style="left:988.43px;top:86.0px;font-size:13.6px;color:#a3a3a3;letter-spacing:-0.062px;">Format as</span>
<span class="t" style="left:998.08px;top:104.0px;font-size:13.6px;color:#a3a3a3;letter-spacing:-0.569px;">Table</span>
<span class="t" style="left:1067.91px;top:86.0px;font-size:13.6px;color:#a3a3a3;letter-spacing:0.108px;">Cell</span>
<span class="t" style="left:1054.23px;top:104.0px;font-size:13.6px;color:#a3a3a3;letter-spacing:-0.230px;">Styles</span>
<span class="t" style="left:984.28px;top:132.0px;font-size:12.6px;color:#333333;letter-spacing:0.106px;">Styles</span>
<span class="t" style="left:1130.71px;top:85.0px;font-size:14px;color:#333333;letter-spacing:-0.183px;">Insert</span>
<span class="t" style="left:1177.17px;top:85.0px;font-size:14px;color:#333333;letter-spacing:-0.166px;">Delete</span>
<span class="t" style="left:1223.58px;top:85.0px;font-size:14px;color:#333333;letter-spacing:0.128px;">Format</span>
<span class="t" style="left:1183.57px;top:132.0px;font-size:12.6px;color:#333333;letter-spacing:0.059px;">Cells</span>
<div class="c" style="left:1330px;top:80px;width:45px;height:22px"><span class="t" style="left:8.72px;top:6.0px;font-size:13.6px;color:#a3a3a3;letter-spacing:-0.100px;">Sort &amp;</span></div>
<div class="c" style="left:1330px;top:102px;width:45px;height:18px"><span class="t" style="left:6.92px;top:2.0px;font-size:13.6px;color:#a3a3a3;letter-spacing:-0.100px;">Filter</span></div>
<div class="c" style="left:1335px;top:128px;width:40px;height:18px"><span class="t" style="left:6.57px;top:4.0px;font-size:12.6px;color:#333333;letter-spacing:0.550px;">Editing</span></div>
<span class="t" style="left:1342.66px;top:45.0px;font-size:17.5px;color:#a0a0a0;">A</span>
<span class="t" style="left:1343.01px;top:62.0px;font-size:17.5px;color:#a0a0a0;">Z</span>
<span class="t" style="left:1296.42px;top:42.0px;font-size:22px;color:#989898;">Σ</span>
<span class="t" style="left:17.18px;top:169.0px;font-size:14.6px;color:#444;letter-spacing:0.533px;">Chart 6</span>
<span class="t" style="left:668.70px;top:166.0px;font-size:17.5px;color:#4a4a4a;font-style:italic;font-family:'Liberation Serif', serif;letter-spacing:3.013px;">f<span style="font-size:0.72em">x</span></span>
<span class="t" style="left:142.59px;top:205.0px;font-size:14.4px;color:#262626;">A</span>
<span class="t" style="left:335.57px;top:205.0px;font-size:14.4px;color:#262626;">B</span>
<span class="t" style="left:484.41px;top:205.0px;font-size:14.4px;color:#262626;">C</span>
<span class="t" style="left:590.54px;top:205.0px;font-size:14.4px;color:#262626;">D</span>
<span class="t" style="left:664.86px;top:205.0px;font-size:14.4px;color:#262626;">E</span>
<span class="t" style="left:813.13px;top:205.0px;font-size:14.4px;color:#262626;">G</span>
<span class="t" style="left:887.67px;top:205.0px;font-size:14.4px;color:#262626;">H</span>
<span class="t" style="left:965.07px;top:205.0px;font-size:14.4px;color:#262626;">I</span>
<span class="t" style="left:1038.09px;top:205.0px;font-size:14.4px;color:#262626;">J</span>
<span class="t" style="left:1110.54px;top:205.0px;font-size:14.4px;color:#262626;">K</span>
<span class="t" style="left:1185.60px;top:205.0px;font-size:14.4px;color:#262626;">L</span>
<span class="t" style="left:1258.24px;top:205.0px;font-size:14.4px;color:#262626;">M</span>
<span class="t" style="left:1334.15px;top:205.0px;font-size:14.4px;color:#262626;">N</span>
<span class="t" style="left:15.50px;top:245.0px;font-size:14px;color:#333;">2</span>
<span class="t" style="left:15.45px;top:270.0px;font-size:14px;color:#333;">3</span>
<span class="t" style="left:15.55px;top:293.0px;font-size:14px;color:#333;">4</span>
<span class="t" style="left:15.33px;top:316.0px;font-size:14px;color:#333;">5</span>
<span class="t" style="left:15.54px;top:340.0px;font-size:14px;color:#333;">6</span>
<span class="t" style="left:15.50px;top:363.0px;font-size:14px;color:#333;">7</span>
<span class="t" style="left:15.49px;top:386.0px;font-size:14px;color:#333;">8</span>
<span class="t" style="left:15.55px;top:409.0px;font-size:14px;color:#333;">9</span>
<span class="t" style="left:11.39px;top:432.0px;font-size:14px;color:#333;letter-spacing:0.261px;">10</span>
<span class="t" style="left:11.39px;top:455.0px;font-size:14px;color:#333;letter-spacing:1.374px;">11</span>
<span class="t" style="left:11.39px;top:479.0px;font-size:14px;color:#333;letter-spacing:0.427px;">12</span>
<span class="t" style="left:11.39px;top:502.0px;font-size:14px;color:#333;letter-spacing:0.272px;">13</span>
<span class="t" style="left:11.39px;top:525.0px;font-size:14px;color:#333;letter-spacing:0.095px;">14</span>
<span class="t" style="left:11.39px;top:548.0px;font-size:14px;color:#333;letter-spacing:0.374px;">15</span>
<span class="t" style="left:11.39px;top:571.0px;font-size:14px;color:#333;letter-spacing:0.272px;">16</span>
<span class="t" style="left:11.39px;top:594.0px;font-size:14px;color:#333;letter-spacing:0.427px;">17</span>
<span class="t" style="left:11.39px;top:618.0px;font-size:14px;color:#333;letter-spacing:0.371px;">18</span>
<span class="t" style="left:77.66px;top:244.0px;font-size:15.6px;color:#111;letter-spacing:0.677px;">Project Name:</span>
<span class="t" style="left:326.69px;top:244.0px;font-size:15.6px;color:#111;letter-spacing:0.601px;">Writing the Short Story</span>
<span class="t" style="left:264.60px;top:293.0px;font-size:14.3px;color:#000;font-weight:700;letter-spacing:0.329px;">Start Date</span>
<span class="t" style="left:422.39px;top:293.0px;font-size:14.3px;color:#000;font-weight:700;letter-spacing:0.694px;">Duration</span>
<span class="t" style="left:36.07px;top:315.0px;font-size:15.0px;color:#111;letter-spacing:0.396px;">Choosing a Setting</span>
<span class="t" style="left:362.14px;top:315.0px;font-size:15.0px;color:#111;letter-spacing:0.834px;">3/10/22</span>
<span class="t" style="left:548.37px;top:315.0px;font-size:15.0px;color:#111;">7</span>
<span class="t" style="left:35.77px;top:338.0px;font-size:15.0px;color:#111;letter-spacing:0.547px;">Deciding on Theme</span>
<span class="t" style="left:362.14px;top:338.0px;font-size:15.0px;color:#111;letter-spacing:0.834px;">3/19/22</span>
<span class="t" style="left:539.15px;top:338.0px;font-size:15.0px;color:#111;letter-spacing:0.995px;">12</span>
<span class="t" style="left:35.77px;top:362.0px;font-size:15.0px;color:#111;letter-spacing:0.727px;">Developing Profiles</span>
<span class="t" style="left:369.22px;top:362.0px;font-size:15.0px;color:#111;letter-spacing:1.249px;">4/2/22</span>
<span class="t" style="left:539.15px;top:362.0px;font-size:15.0px;color:#111;letter-spacing:0.882px;">10</span>
<span class="t" style="left:36.16px;top:385.0px;font-size:15.0px;color:#111;letter-spacing:0.785px;">Outlining Plot</span>
<span class="t" style="left:361.28px;top:385.0px;font-size:15.0px;color:#111;letter-spacing:0.977px;">4/14/22</span>
<span class="t" style="left:548.44px;top:385.0px;font-size:15.0px;color:#111;">8</span>
<span class="t" style="left:36.65px;top:408.0px;font-size:15.0px;color:#111;letter-spacing:0.499px;">Writing using Building Blocks</span>
<span class="t" style="left:361.28px;top:408.0px;font-size:15.0px;color:#111;letter-spacing:0.977px;">4/24/22</span>
<span class="t" style="left:548.39px;top:408.0px;font-size:15.0px;color:#111;">2</span>
<span class="t" style="left:867.75px;top:302.0px;font-size:19.1px;color:#595959;letter-spacing:0.325px;">Project Gantt Chart</span>
<span class="t" style="left:594.90px;top:360.0px;font-size:12.6px;color:#595959;letter-spacing:0.197px;">Writing using Bui<span class="r">lding Blocks</span></span>
<span class="t" style="left:679.87px;top:408.0px;font-size:12.6px;color:#595959;letter-spacing:0.300px;">Outlining Plot</span>
<span class="t" style="left:648.37px;top:457.0px;font-size:12.6px;color:#595959;letter-spacing:0.113px;">Developing Profiles</span>
<span class="t" style="left:648.01px;top:505.0px;font-size:12.6px;color:#595959;letter-spacing:0.368px;">Decidin<span class="r">g on Theme</span></span>
<span class="t" style="left:652.38px;top:553.0px;font-size:12.6px;color:#595959;letter-spacing:0.018px;">Choosing a Setting</span>
<span class="t" style="left:750.73px;top:595.0px;font-size:12.6px;color:#595959;letter-spacing:1.075px;">2/8/22</span>
<span class="t" style="left:804.31px;top:595.0px;font-size:12.6px;color:#595959;letter-spacing:0.930px;">2/18/22</span>
<span class="t" style="left:861.50px;top:595.0px;font-size:12.6px;color:#595959;letter-spacing:0.925px;">2/28/22</span>
<span class="t" style="left:918.63px;top:595.0px;font-size:12.6px;color:#595959;letter-spacing:0.908px;">3/10/22</span>
<span class="t" style="left:975.90px;top:595.0px;font-size:12.6px;color:#595959;letter-spacing:0.868px;">3/20/22</span>
<span class="t" style="left:1033.01px;top:595.0px;font-size:12.6px;color:#595959;letter-spacing:0.892px;">3/30/22</span>
<span class="t" style="left:1094.14px;top:595.0px;font-size:12.6px;color:#595959;letter-spacing:0.945px;">4/9/22</span>
<span class="t" style="left:1147.47px;top:595.0px;font-size:12.6px;color:#595959;letter-spacing:0.900px;">4/19/22</span>
<span class="t" style="left:1204.83px;top:595.0px;font-size:12.6px;color:#595959;letter-spacing:0.808px;">4/29/22</span>
<span class="t" style="left:1264.66px;top:595.0px;font-size:12.6px;color:#595959;letter-spacing:1.146px;">5/9/22</span>
<svg width="1379" height="633" viewBox="0 0 1379 633"><rect x="695" y="124" width="200" height="341" fill="#000" opacity="0.16" filter="url(#ms)"/>
<rect x="693.00" y="120.70" width="200.00" height="342.50" fill="#fff" stroke="#c9c9c9" stroke-width="1" />
<line x1="731.50" y1="156.50" x2="891.50" y2="156.50" stroke="#d6d6d6" stroke-width="1.0" />
<line x1="731.50" y1="224.80" x2="891.50" y2="224.80" stroke="#d6d6d6" stroke-width="1.0" />
<line x1="731.50" y1="261.10" x2="891.50" y2="261.10" stroke="#d6d6d6" stroke-width="1.0" />
<line x1="731.50" y1="362.20" x2="891.50" y2="362.20" stroke="#d6d6d6" stroke-width="1.0" />
<path d="M876.2 132.2 L881.6 137.4 L876.2 142.6" fill="none" stroke="#9a9a9a" stroke-width="1.3" />
<rect x="692.50" y="428.80" width="200.70" height="32.90" fill="#cbc9c8" stroke="#e8121a" stroke-width="3.5" />
<path d="M718 200.6 H723.4 V214 H717.6" fill="none" stroke="#444" stroke-width="1.2" stroke-dasharray="1.6 1.5"/>
<path d="M711.8 205.6 V214 H717.8" fill="none" stroke="#444" stroke-width="1.3" />
<path d="M709.8 201.4 H714.4 A2.8 2.8 0 0 1 717.2 204.2 V205.8 M713 198 L709.4 201.4 L713 204.8" fill="none" stroke="#2e75c8" stroke-width="1.5" />
<path d="M714.4 209.6 H716.4 M718.2 209.6 H720.6" fill="none" stroke="#444" stroke-width="1.1" />
<rect x="709.20" y="277.40" width="5.40" height="8.80" fill="#c8c8c8" stroke="#8a8a8a" stroke-width="1.1" />
<rect x="714.60" y="269.40" width="6.00" height="16.80" fill="#fff" stroke="#444" stroke-width="1.2" />
<rect x="720.60" y="273.60" width="5.80" height="12.60" fill="#69a9e6" stroke="#2e75c8" stroke-width="1.2" />
<rect x="709.00" y="302.60" width="12.60" height="15.00" fill="#4f93dc" stroke="#2e75c8" stroke-width="1.0" />
<path d="M709 307.6 H721.6 M709 312.6 H721.6 M713.2 302.6 V317.6 M717.4 302.6 V317.6" fill="none" stroke="#fff" stroke-width="1.0" />
<rect x="718.00" y="309.40" width="9.40" height="10.60" fill="#fff" />
<rect x="719.20" y="313.40" width="3.20" height="5.80" fill="#fff" stroke="#444" stroke-width="1.1" />
<rect x="722.40" y="305.60" width="4.00" height="13.60" fill="#fff" stroke="#444" stroke-width="1.1" />
<rect x="709.60" y="335.80" width="12.00" height="14.80" fill="#f4f4f4" stroke="#a9a9a9" stroke-width="1.3" rx="1.2" />
<path d="M711.2 334 H722.6 A1.4 1.4 0 0 1 724 335.4 V348.6" fill="none" stroke="#a9a9a9" stroke-width="1.3" />
<path d="M721.8 336 L724 334.4" fill="none" stroke="#a9a9a9" stroke-width="1.1" />
<path d="M713.6 436 L719.8 442.4 L714.4 447.4 L708.6 441.4 Z" fill="#fbfbfb" stroke="#444" stroke-width="1.3" stroke-linejoin="round"/>
<path d="M711.4 438.6 V436.4 A1.7 1.7 0 0 1 714.8 436.4 V438" fill="none" stroke="#444" stroke-width="1.2" />
<path d="M725.6 441.8 L719.4 447.8" fill="none" stroke="#444" stroke-width="2.6" stroke-linecap="round"/>
<path d="M719.6 446.4 L721.4 448.2 C720 451.4 716.8 452.6 713.4 452.2 C716.2 451 717.4 448.8 719.6 446.4 Z" fill="#3e8ede" stroke="#2e75c8" stroke-width="1" />
<rect x="695" y="484" width="223" height="71" fill="#000" opacity="0.18" filter="url(#ms)"/>
<rect x="692.80" y="481.40" width="224.20" height="71.50" fill="#fff" stroke="#d2d2d2" stroke-width="1" />
<path d="M711.3 500.3 L718.0 493.6 L726.0 498.1 L718.5 507.1 Z" fill="#fff" stroke="#444" stroke-width="1.4" stroke-linejoin="round"/>
<path d="M717.8 496.6 V491.2 A2.0 2.0 0 0 1 721.8 491.2 V497.8" fill="none" stroke="#444" stroke-width="1.3" />
<path d="M724.0 496.2 C726.6 493.6 729.6 496 728.9 499.6 C728.6 502 728.5 504.4 728.5 506.8" fill="none" stroke="#1f6fb8" stroke-width="2.1" stroke-linecap="round"/>
<rect x="707.00" y="509.60" width="27.90" height="7.00" fill="#ed7d31" />
<path d="M737.00 501.50 L740.20 504.90 L743.40 501.50" fill="none" stroke="#444" stroke-width="1.5" stroke-linejoin="miter"/>
<path d="M778 491.3 H760.6 V507.6 H766.4" fill="none" stroke="#444" stroke-width="1.4" />
<path d="M782.8 493.6 L772.2 504" fill="none" stroke="#2e9be0" stroke-width="5.4" stroke-linecap="round"/>
<path d="M782.8 493.6 L773.4 502.8" fill="none" stroke="#fff" stroke-width="2.8" stroke-linecap="round"/>
<path d="M769.9 502.6 L773.8 506.4 L768.3 507.9 Z" fill="#2e9be0" stroke="#2e9be0" stroke-width="0.8" stroke-linejoin="round"/>
<rect x="759.30" y="509.60" width="27.70" height="7.00" fill="#4472c4" />
<path d="M789.00 501.50 L792.20 504.90 L795.40 501.50" fill="none" stroke="#444" stroke-width="1.5" stroke-linejoin="miter"/>
<rect x="801.40" y="503.40" width="110.50" height="26.60" fill="#fff" stroke="#c6c6c6" stroke-width="1" />
<path d="M901.70 515.60 L904.70 518.80 L907.70 515.60" fill="none" stroke="#444" stroke-width="1.4" stroke-linejoin="miter"/></svg>
<span class="t" style="left:736.39px;top:131.0px;font-size:14.6px;color:#a6a6a6;letter-spacing:0.071px;"><u>M</u>ove</span>
<span class="t" style="left:736.39px;top:167.0px;font-size:14.6px;color:#2b2b2b;letter-spacing:-0.506px;"><u>D</u>elete</span>
<span class="t" style="left:736.39px;top:200.0px;font-size:14.6px;color:#2b2b2b;letter-spacing:-0.471px;">Reset to M<u>a</u>tch Style</span>
<span class="t" style="left:736.39px;top:236.0px;font-size:14.6px;color:#2b2b2b;letter-spacing:-0.259px;"><u>F</u>ont...</span>
<span class="t" style="left:736.79px;top:272.0px;font-size:14.6px;color:#2b2b2b;letter-spacing:-0.495px;">Change Chart T<u>y</u>pe...</span>
<span class="t" style="left:736.39px;top:304.0px;font-size:14.6px;color:#2b2b2b;letter-spacing:-0.615px;">S<u>e</u>lect Data...</span>
<span class="t" style="left:736.79px;top:336.0px;font-size:14.6px;color:#a6a6a6;letter-spacing:-0.320px;">3-D <u>R</u>otation...</span>
<span class="t" style="left:736.95px;top:372.0px;font-size:14.6px;color:#2b2b2b;letter-spacing:-0.319px;">Add <u>M</u>ajor Gridlines</span>
<span class="t" style="left:736.95px;top:405.0px;font-size:14.6px;color:#2b2b2b;letter-spacing:-0.302px;">Add Mi<u>n</u>or Gridlines</span>
<span class="t" style="left:736.39px;top:437.0px;font-size:14.6px;color:#2b2b2b;letter-spacing:-0.289px;"><u>F</u>ormat Axis...</span>
<span class="t" style="left:710.24px;top:232.0px;font-size:23.5px;color:#3b3b3b;">A</span>
<span class="t" style="left:711.07px;top:525.0px;font-size:13.3px;color:#2b2b2b;letter-spacing:0.554px;">Fill</span>
<span class="t" style="left:749.69px;top:525.0px;font-size:13.3px;color:#2b2b2b;letter-spacing:0.611px;">Outline</span>
<span class="t" style="left:804.46px;top:508.0px;font-size:14.2px;color:#444;letter-spacing:-0.203px;">Vertical (Categ</span>
<svg width="1379" height="633" viewBox="0 0 1379 633"><path d="M2.6 0 H1376.4 A2.6 2.6 0 0 1 1379 2.6 V630.4 A2.6 2.6 0 0 1 1376.4 633 H2.6 A2.6 2.6 0 0 1 0 630.4 V2.6 A2.6 2.6 0 0 1 2.6 0 Z M4 4 V628.8 H1375.1 V4 Z" fill="#548235" fill-rule="evenodd"/></svg>
</div></body></html>
